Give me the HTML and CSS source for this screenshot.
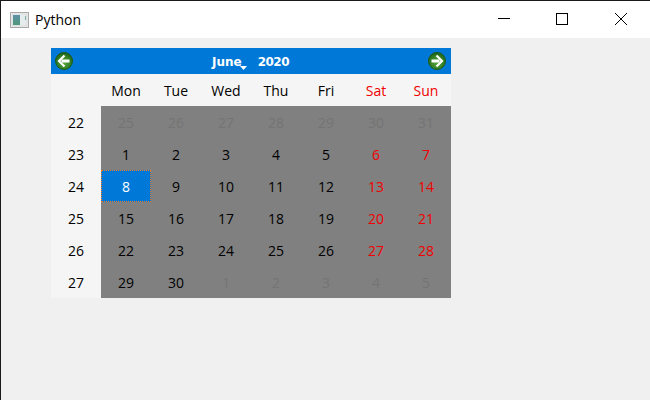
FILE: index.html
```
<!DOCTYPE html>
<html lang="en">
<head>
<meta charset="utf-8">
<title>Python</title>
<link rel="stylesheet" href="styles.css">
</head>
<body>
<div class="window">
  <div class="titlebar">
    <div class="app">
      <svg class="app-icon" width="20" height="16" viewBox="0 0 20 16">
        <defs>
          <linearGradient id="g" x1="0" y1="0" x2="0" y2="1"><stop offset="0" stop-color="#5f8fa8"/><stop offset="1" stop-color="#4f9a78"/></linearGradient>
          <radialGradient id="orb" cx="0.5" cy="0.6" r="0.6"><stop offset="0" stop-color="#5aa83f"/><stop offset="0.7" stop-color="#2f7d23"/><stop offset="1" stop-color="#1d5c1a"/></radialGradient>
        </defs>
        <rect x="0.5" y="0.5" width="18" height="15" fill="#f0f0f0" stroke="#a9a9a9"/>
        <rect x="2" y="2" width="15" height="12" fill="#e6ecee" stroke="#c8c8c8" stroke-width="0.5"/>
        <rect x="3" y="3" width="7" height="10" fill="url(#g)"/>
        <rect x="15" y="4" width="1" height="4" fill="#7fb0a0"/>
      </svg>
      <span class="app-name">Python</span>
    </div>
    <div class="controls">
      <div class="ctl"><svg width="14" height="14" viewBox="0 0 14 14"><path d="M1 6.5H13" stroke="#000" fill="none"/></svg></div>
      <div class="ctl"><svg width="14" height="14" viewBox="0 0 14 14"><rect x="1.5" y="1.5" width="11" height="11" stroke="#000" fill="none"/></svg></div>
      <div class="ctl"><svg width="14" height="14" viewBox="0 0 14 14"><path d="M1 1L13 13M13 1L1 13" stroke="#000" fill="none"/></svg></div>
    </div>
  </div>
  <div class="content">
    <div class="calendar">
      <div class="nav">
        <svg class="arrow" width="18" height="18" viewBox="0 0 18 18"><circle cx="9" cy="9" r="8.5" fill="url(#orb)" stroke="#1d5c1a"/><path d="M14.5 9H6.5" stroke="#fff" stroke-width="3" fill="none"/><path d="M9.5 3.5L4 9L9.5 14.5" stroke="#fff" stroke-width="2.2" fill="none"/></svg>
        <div class="period">
          <span class="month">June<svg class="caret" width="7" height="4" viewBox="0 0 7 4"><path d="M0 0H7L3.5 4Z" fill="#fff"/></svg></span>
          <span class="year">2020</span>
        </div>
        <svg class="arrow" width="18" height="18" viewBox="0 0 18 18"><circle cx="9" cy="9" r="8.5" fill="url(#orb)" stroke="#1d5c1a"/><path d="M3.5 9H11.5" stroke="#fff" stroke-width="3" fill="none"/><path d="M8.5 3.5L14 9L8.5 14.5" stroke="#fff" stroke-width="2.2" fill="none"/></svg>
      </div>
      <div class="grid">
        <div class="head"></div><div class="head">Mon</div><div class="head">Tue</div><div class="head">Wed</div><div class="head">Thu</div><div class="head">Fri</div><div class="head red">Sat</div><div class="head red">Sun</div>

        <div class="week">22</div><div class="day dim">25</div><div class="day dim">26</div><div class="day dim">27</div><div class="day dim">28</div><div class="day dim">29</div><div class="day dim">30</div><div class="day dim">31</div>

        <div class="week">23</div><div class="day">1</div><div class="day">2</div><div class="day">3</div><div class="day">4</div><div class="day">5</div><div class="day red">6</div><div class="day red">7</div>

        <div class="week">24</div><div class="day selected">8</div><div class="day">9</div><div class="day">10</div><div class="day">11</div><div class="day">12</div><div class="day red">13</div><div class="day red">14</div>

        <div class="week">25</div><div class="day">15</div><div class="day">16</div><div class="day">17</div><div class="day">18</div><div class="day">19</div><div class="day red">20</div><div class="day red">21</div>

        <div class="week">26</div><div class="day">22</div><div class="day">23</div><div class="day">24</div><div class="day">25</div><div class="day">26</div><div class="day red">27</div><div class="day red">28</div>

        <div class="week">27</div><div class="day">29</div><div class="day">30</div><div class="day dim">1</div><div class="day dim">2</div><div class="day dim">3</div><div class="day dim">4</div><div class="day dim">5</div>
      </div>
    </div>
  </div>
</div>
</body>
</html>
```
FILE: styles.css
```
* { box-sizing: border-box; }
html, body { margin: 0; padding: 0; }
body { width: 650px; height: 400px; overflow: hidden; font-family: "Open Sans", "Noto Sans", sans-serif; }
.window { width: 650px; height: 400px; display: flex; flex-direction: column; background: #f0f0f0; border-top: 1px solid #1a1a1a; border-left: 1px solid #1a1a1a; }
.titlebar { height: 37px; background: #fff; display: flex; justify-content: space-between; align-items: center; flex: none; }
.app { display: flex; align-items: center; padding-left: 9px; }
.app-icon { margin-right: 5px; }
.app-name { font-size: 14px; color: #000; }
.controls { display: flex; height: 100%; }
.ctl { width: 58px; display: flex; align-items: flex-start; justify-content: center; padding-top: 11px; }
.ctl:last-child { margin-left: 1px; }
.content { padding: 10px 0 0 50px; flex: 1; }
.calendar { width: 400px; }
.nav { height: 26px; background: #0078d7; display: flex; align-items: center; justify-content: space-between; padding: 0 5px 0 4px; }
.arrow { display: block; margin-bottom: 1px; }
.period { display: flex; gap: 16px; color: #fff; font: bold 12px "DejaVu Sans", sans-serif; padding-top: 1px; }
.year { letter-spacing: -0.5px; }
.month { position: relative; }
.caret { position: absolute; right: -5px; bottom: -1px; }
.grid { display: grid; grid-template-columns: repeat(8, 50px); grid-template-rows: repeat(7, 32px); background: #808080; font-size: 14px; }
.grid > div { display: flex; align-items: center; justify-content: center; color: #000; }
.grid > .head, .grid > .week { background: #f5f5f5; }
.grid > .red { color: #f00000; }
.grid > .dim { color: #747474; }
.grid > .selected { background: #0078d7; color: #fff; border: 1px dotted #f47a1f; }
```
